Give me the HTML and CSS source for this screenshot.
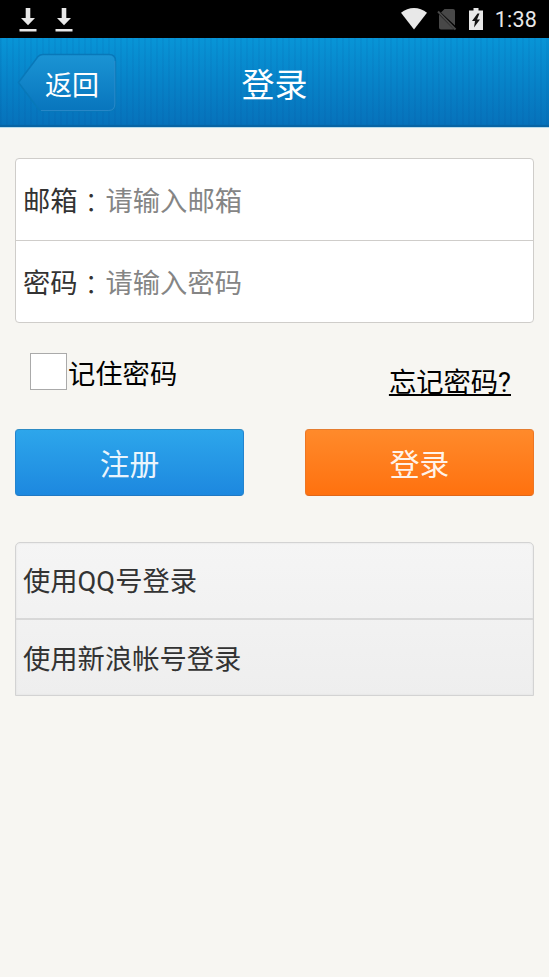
FILE: index.html
```html
<!DOCTYPE html>
<html lang="zh-CN">
<head>
<meta charset="utf-8">
<title>登录</title>
<link rel="stylesheet" href="styles.css">
</head>
<body>
<div class="status">
  <svg class="download" viewBox="0 0 18 24"><path d="M6.7 0h4.6v10H16l-7 7.2L2 10h4.7zM0.5 21h17v2.4h-17z"/></svg>
  <svg class="download" viewBox="0 0 18 24"><path d="M6.7 0h4.6v10H16l-7 7.2L2 10h4.7zM0.5 21h17v2.4h-17z"/></svg>
  <svg class="wifi" viewBox="0 0 26 22"><path d="M0 4.8C7.5-1.5 18.500-1.500 26 4.800L13 21.500z"/></svg>
  <svg class="sim" viewBox="0 0 20 22"><path class="card" d="M7.500 0H16q2 0 2 2v14.500L4 3.500zM2 5.500L17 20.500H4q-2 0-2-2z"/><path class="slash" d="M1 2.500L18.500 20.500"/></svg>
  <svg class="battery" viewBox="0 0 14 22"><path d="M4.500 0h5v2.500H14V22H0V2.500h4.500z"/><path class="bolt" d="M8.500 5.500L3 13h3l-1 6.500L11 11.500H8l2.500-6z"/></svg>
  <span class="clock">1:38</span>
</div>
<header class="header">
  <a class="back">
    <svg class="back-shape" viewBox="0 0 100 60"><defs><linearGradient id="g" x2="0" y2="1"><stop offset="0" stop-color="#1b94d4"/><stop offset="1" stop-color="#0875bd"/></linearGradient></defs><path class="edge" d="M1.500 29.500L21 3.500Q23 1.500 26 1.500H92Q98.500 1.500 98.500 8V51.500Q98.500 58 92 58H26Q23 58 21 55.500z"/><path class="glow" d="M24 57.500H91.500Q97.800 57.500 97.800 51V8"/></svg>
    <span>返回</span>
  </a>
  <h1>登录</h1>
</header>
<main>
  <form>
    <div class="fields">
      <label class="field"><span class="label">邮箱<span lang="zh-TW">：</span></span><input type="text" placeholder="请输入邮箱"></label>
      <label class="field"><span class="label">密码<span lang="zh-TW">：</span></span><input type="password" placeholder="请输入密码"></label>
    </div>
    <div class="options">
      <label class="remember"><input type="checkbox"><span>记住密码</span></label>
      <a class="forgot">忘记密码?</a>
    </div>
    <div class="actions">
      <button type="button" class="btn register">注册</button>
      <button type="button" class="btn login">登录</button>
    </div>
  </form>
  <nav class="others">
    <a>使用QQ号登录</a>
    <a>使用新浪帐号登录</a>
  </nav>
</main>
</body>
</html>
```
FILE: styles.css
```css
* { box-sizing: border-box; }
body { margin: 0; min-height: 977px; background: #f7f6f2; color: #333; font: 27.3px/40px Roboto, "Noto Sans CJK SC", sans-serif; }
.status { display: flex; align-items: flex-start; height: 38px; padding: 8px 12px 0 19px; background: #000; }
.status svg { flex: none; fill: #e8e8e8; }
.download { width: 18px; height: 24px; margin-right: 18px; }
.wifi { width: 26px; height: 22px; margin-left: auto; }
.sim { width: 20px; height: 22px; margin: 1px 12px 0 10px; }
.sim .card { fill: #484848; }
.sim .slash { fill: none; stroke: #484848; stroke-width: 2; }
.battery { width: 14px; height: 22px; margin-right: 12px; }
.battery .bolt { fill: #111; }
.clock { color: #e8e8e8; font: 21.500px/24px Roboto, sans-serif; letter-spacing: .2px; }
.header { display: grid; grid-template-columns: 117px 1fr 117px; align-items: start; height: 90px; padding-top: 15px; background: repeating-linear-gradient(90deg, rgba(0,60,140,.07) 0 2px, transparent 2px 6px), linear-gradient(#0895d7, #0671ba); border-bottom: 1px solid #b9dcec; box-shadow: inset 0 -2px 1px #0864a4; }
.back { position: relative; height: 60px; padding: 13px 0 0 45px; color: #fff; font-size: 27px; line-height: 40px; }
.back-shape { position: absolute; left: 17px; top: 0; width: 100px; height: 60px; }
.edge { fill: url(#g); stroke: #0878b9; stroke-width: 1.500; }
.glow { fill: none; stroke: #368fcd; stroke-width: 1; opacity: .7; }
.back span { position: relative; }
h1 { margin: 8px 0 0; color: #fff; font-size: 33px; font-weight: 400; line-height: 50px; text-align: center; }
main { padding: 30px 15px 0; }
.fields { height: 165px; background: #fff; border: 1px solid #cfcdca; border-radius: 4px; }
.field { display: flex; align-items: center; height: 81px; padding: 4px 0 0 7px; }
.field + .field { height: 82px; padding-top: 5px; border-top: 1px solid #cfcdca; }
.label { width: 82.500px; white-space: nowrap; }
.label span { font-family: "Noto Sans CJK TC", sans-serif; font-weight: 300; line-height: 1; vertical-align: -2px; }
.field input { flex: 1; min-width: 0; height: 48px; padding: 0; border: 0; outline: 0; background: transparent; font: inherit; }
.field input::placeholder { color: #858585; opacity: 1; }
.options { display: flex; justify-content: space-between; height: 106px; padding: 30px 23px 0 15px; color: #000; }
.remember { display: flex; height: 38px; }
.remember input { appearance: none; width: 37px; height: 37px; margin: 0 1px 0 0; background: #fff; border: 1px solid #aaa; }
.remember span { margin-top: 2px; }
.forgot { height: 40px; margin-top: 10px; text-decoration: underline; text-decoration-thickness: 1.500px; text-underline-offset: 2px; text-decoration-skip-ink: none; }
.actions { display: flex; justify-content: space-between; }
.btn { width: 229px; height: 67px; padding: 5px 0 0; border: 1px solid; border-radius: 4px; color: rgba(255,255,255,.92); font: 400 29.800px/40px Roboto, "Noto Sans CJK SC", sans-serif; }
.register { background: linear-gradient(#2da6eb, #1d88df); border-color: #2d8bc4 #2384cf #2079c3; }
.login { background: linear-gradient(#ff8a2b, #ff710f); border-color: #e57d30 #ed7623 #df6719; }
.others { height: 154px; margin-top: 46px; border: 1px solid #d3d3d3; border-radius: 5px 5px 0 0; background: linear-gradient(#f5f5f5, #eee); box-shadow: inset 0 0 2px #ddd; }
.others a { display: flex; align-items: center; height: 75px; padding: 3px 0 0 7px; }
.others a + a { height: 77px; padding-top: 4px; border-top: 2px solid #d8d8d8; }
```
